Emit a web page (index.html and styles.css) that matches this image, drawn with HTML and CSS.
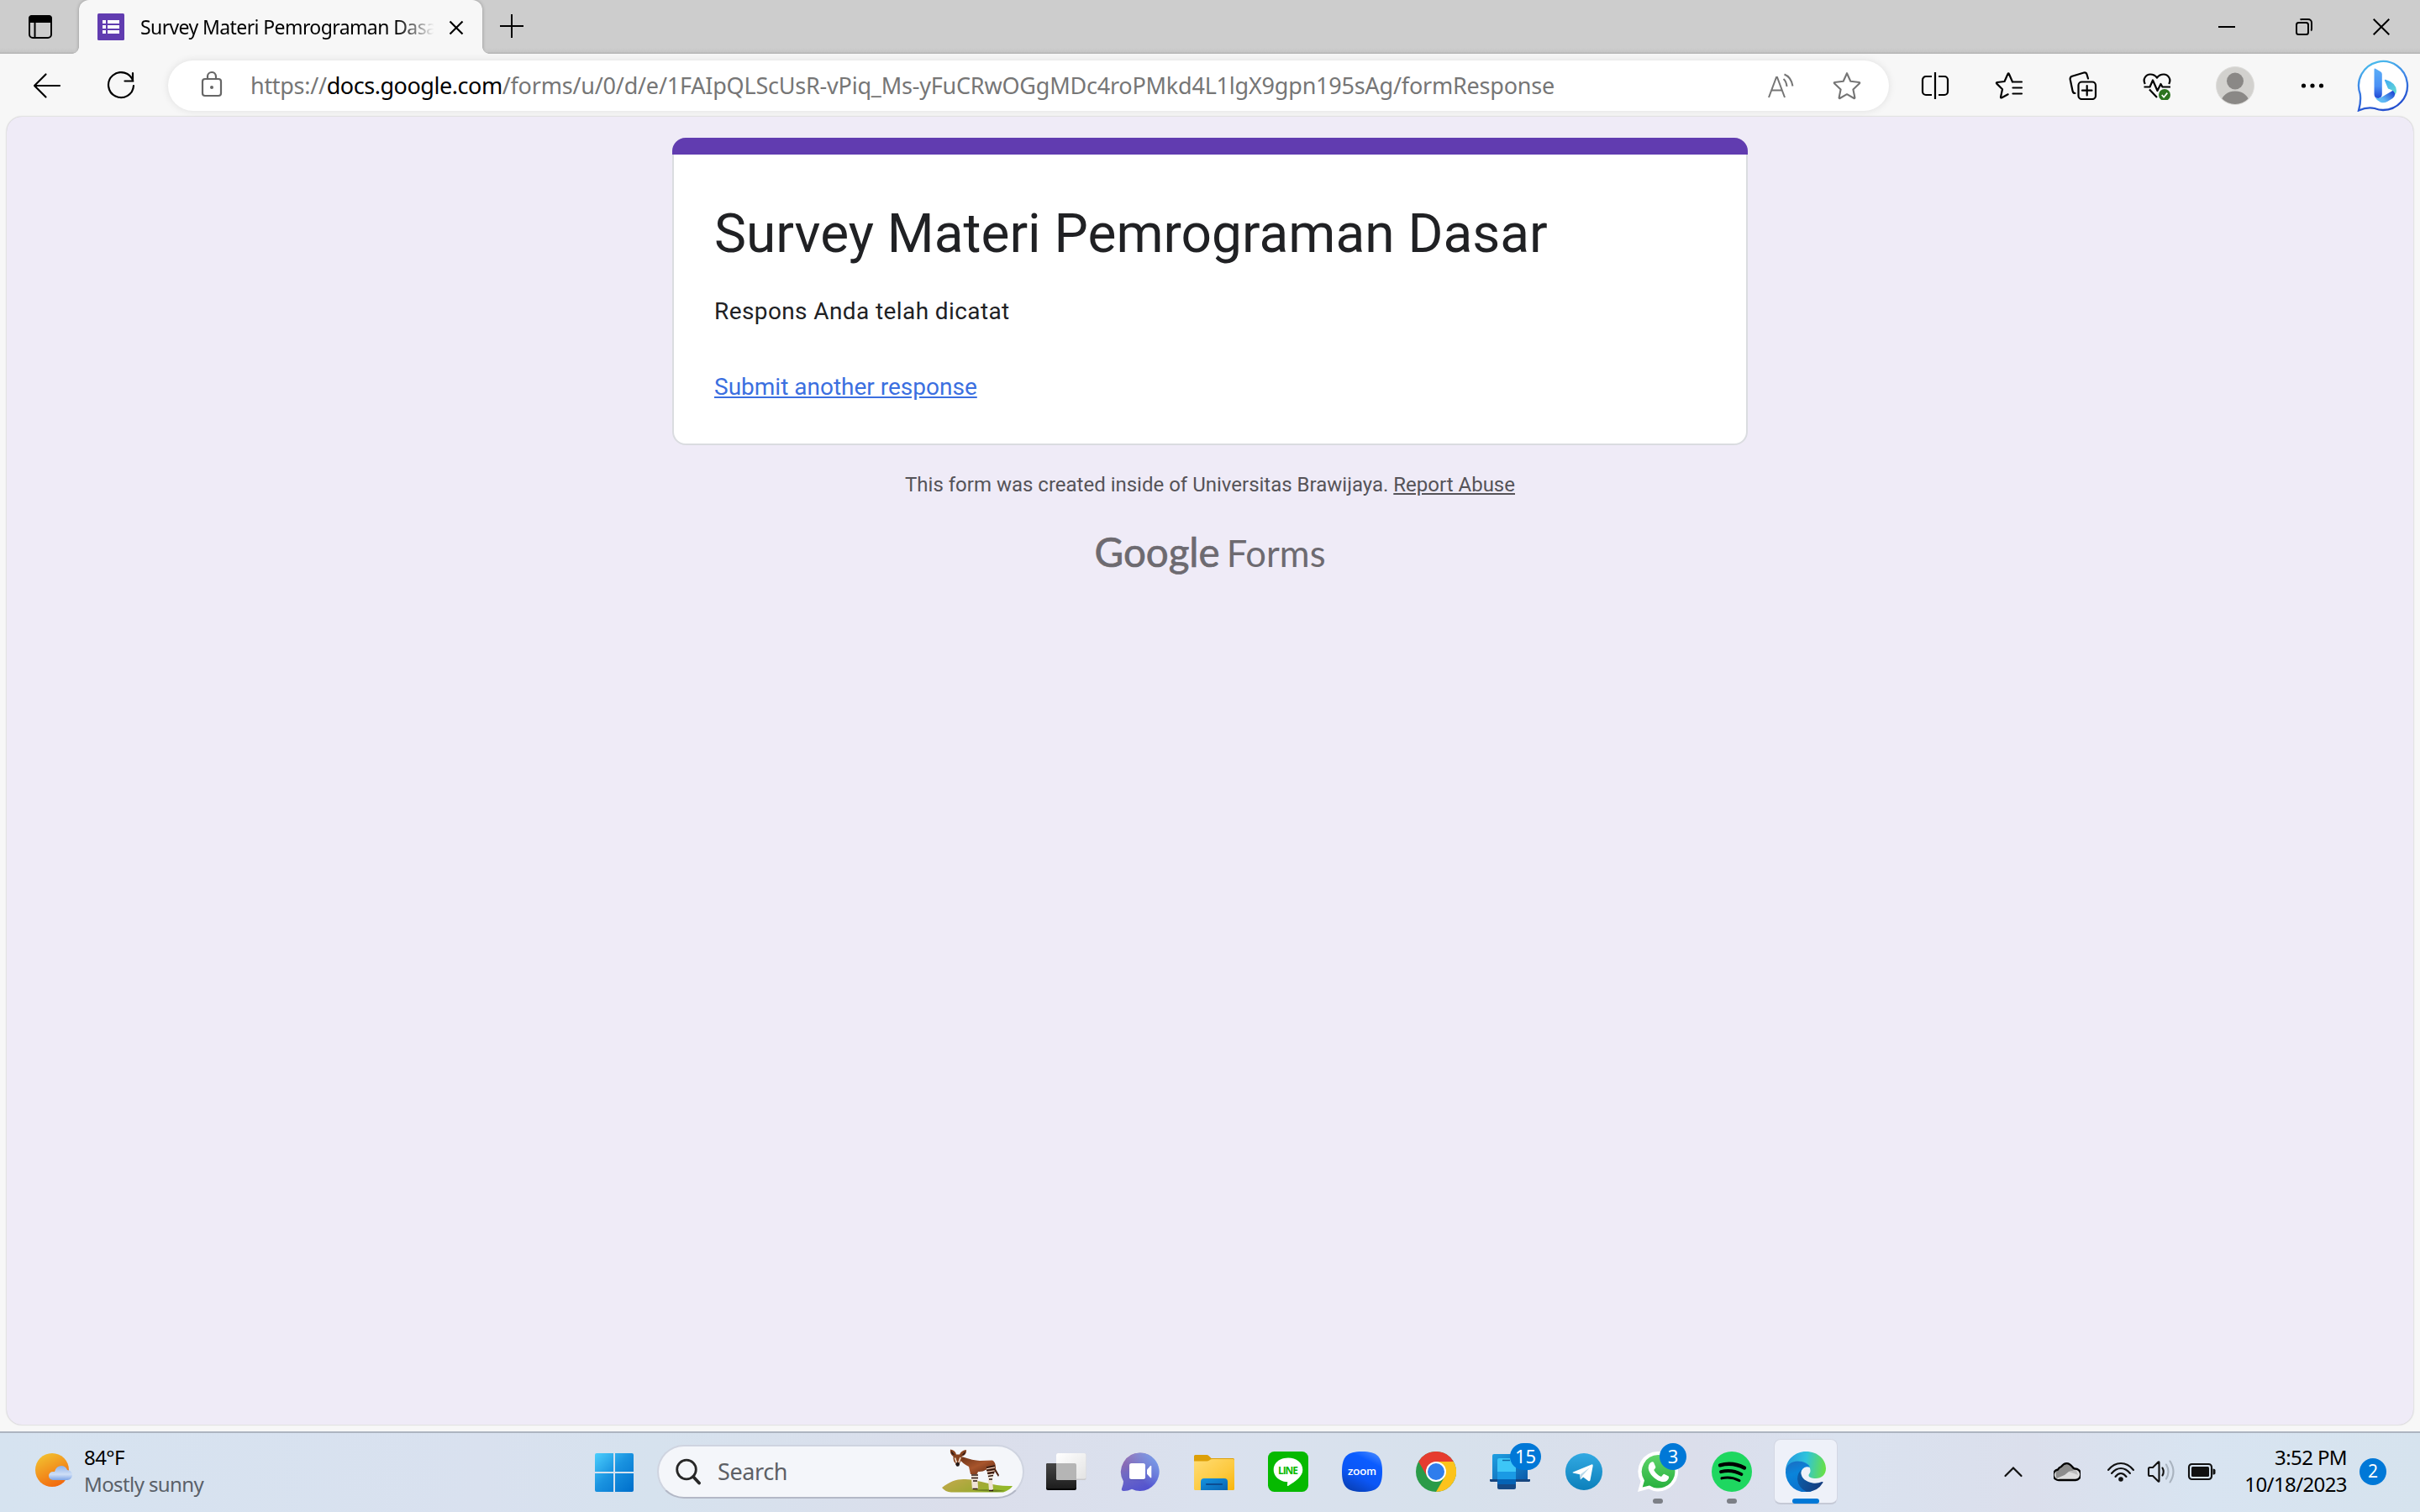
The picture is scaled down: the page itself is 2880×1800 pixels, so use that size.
FILE: index.html
```html
<!DOCTYPE html>
<html lang="id">
<head>
<meta charset="utf-8">
<title>Survey Materi Pemrograman Dasar</title>
<link rel="stylesheet" href="styles.css">
</head>
<body>
<header class="tabstrip">
  <div class="tab-actions">
    <svg width="28" height="28" viewBox="0 0 28 28"><rect x="1" y="1" width="26" height="26" rx="4" fill="none" stroke="#000" stroke-width="2"/><path d="M0 9V4a4 4 0 0 1 4-4h20a4 4 0 0 1 4 4v5z"/><path d="M7.5 8v19" stroke="#000" stroke-width="2"/></svg>
  </div>
  <div class="tab">
    <svg class="favicon" width="32" height="32" viewBox="0 0 32 32"><rect width="32" height="32" rx="1.5" fill="#613cb0"/><path fill="#fff" d="M6 8h4v4H6zM12 8h14v4H12zM6 14h4v4H6zM12 14h14v4H12zM6 20h4v4H6zM12 20h14v4H12z"/></svg>
    <span class="tab-title">Survey Materi Pemrograman Dasar</span>
    <svg class="tab-close" width="18" height="18" viewBox="0 0 18 18"><path d="M1.5 1.5l15 15M16.500 1.500l-15 15" stroke="#000" stroke-width="2.200"/></svg>
  </div>
  <svg class="new-tab" width="28" height="28" viewBox="0 0 28 28"><path d="M14 0v28M0 14h28" stroke="#000" stroke-width="2"/></svg>
  <div class="window-controls">
    <span><svg width="20" height="20" viewBox="0 0 20 20"><path d="M0 10h20" stroke="#000" stroke-width="2"/></svg></span>
    <span><svg width="20" height="20" viewBox="0 0 20 20" fill="none" stroke="#000" stroke-width="2"><rect x="1" y="5" width="14" height="14" rx="2.500"/><path d="M5.500 1.500Q6 1 7.500 1H15a4 4 0 0 1 4 4v7.500q0 1.500-.8 2"/></svg></span>
    <span><svg width="20" height="20" viewBox="0 0 20 20"><path d="M.7.7l18.600 18.600M19.300.7L.7 19.300" stroke="#000" stroke-width="2"/></svg></span>
  </div>
</header>

<nav class="toolbar">
  <div class="nav-btn"><svg width="34" height="32" viewBox="0 0 34 32" fill="none" stroke="#000" stroke-width="2.200" stroke-linecap="round" stroke-linejoin="round"><path d="M32 16H2M15.500 2.500L2 16l13.500 13.500"/></svg></div>
  <div class="nav-btn refresh"><svg width="34" height="34" viewBox="0 0 34 34" fill="none" stroke="#000" stroke-width="2.200" stroke-linecap="round" stroke-linejoin="round"><path d="M31.300 11.500A15 15 0 1 0 32 17M31 2v9.500H21.500"/></svg></div>
  <div class="address">
    <svg class="lock" width="26" height="32" viewBox="0 0 26 32" fill="none" stroke="#666" stroke-width="2.200"><rect x="2" y="10" width="22" height="20" rx="3"/><path d="M8 10V7a5 5 0 0 1 10 0v3"/><circle cx="13" cy="20" r="2" fill="#666" stroke="none"/></svg>
    <span class="url"><span class="scheme">https://</span><b>docs.google.com</b>/forms/u/0/d/e/1FAIpQLScUsR-vPiq_Ms-yFuCRwOGgMDc4roPMkd4L1lgX9gpn195sAg/formResponse</span>
    <svg class="read" width="32" height="32" viewBox="0 0 32 32" fill="none" stroke="#757575" stroke-width="2"><path d="M2 30L11 6h1l9 24M5.500 21.500h12M19.500 8q3.500 3 4 9M20.500 2.500q8 3 10 14"/></svg>
    <svg class="star" width="34" height="34" viewBox="0 0 34 34" fill="none" stroke="#757575" stroke-width="2.100" stroke-linejoin="round"><path d="M17 2.200l4.300 9.600 10.400 1.200q1 .2.300 1.200l-7.600 7.300 2 9.700q.1 1.200-1 .8L17 27.200 8.600 32q-1.100.4-1-.8l2-9.700L2 14.200q-.7-1 .3-1.200l10.400-1.200z"/></svg>
  </div>
  <div class="tools">
    <span><svg width="34" height="34" viewBox="0 0 34 34" fill="none" stroke="#000" stroke-width="2.200"><path d="M17 1v32M13 6H6a4 4 0 0 0-4 4v14a4 4 0 0 0 4 4h7M21 6h7a4 4 0 0 1 4 4v14a4 4 0 0 1-4 4h-7"/></svg></span>
    <span><svg width="34" height="34" viewBox="0 0 34 34" fill="none" stroke="#000" stroke-width="2.200" stroke-linecap="round" stroke-linejoin="round"><path d="M21 12.500l-4-9.300q-.8-1.600-1.600 0L11.500 12l-8.700 1q-1.600.4-.5 1.600l6.700 6.600-2 9.300q0 1.500 1.400.8l7.300-4M21.500 12.500H32M21.500 19.500H32M21.500 26.500H32"/></svg></span>
    <span><svg width="34" height="34" viewBox="0 0 34 34" fill="none" stroke="#000" stroke-width="2.200" stroke-linecap="round"><rect x="11.500" y="12.500" width="20.500" height="20.500" rx="4"/><path d="M21.700 17v11.500M16 22.700h11.500M7.500 26Q5 26 4.500 23L1.700 9.500Q1.300 6.500 4 5.700L18 1.500q2.700-.5 3.500 2L23 8.500"/></svg></span>
    <span><svg width="34" height="34" viewBox="0 0 34 34" fill="none" stroke="#000" stroke-width="2.200" stroke-linejoin="round"><path d="M2.800 15C-.5 9 4 3.500 9 3.500q5 0 8 4 3-4 8-4c5 0 9.500 5.500 6.200 11.500M1.500 18.500h7l3.500-8 5.500 12.500 4-8 2 3.500h9.500M8 21.500l9 9.500"/><circle cx="26" cy="28" r="8" fill="#f7f7f7" stroke="none"/><circle cx="26" cy="28" r="7" fill="#2c7420" stroke="none"/><path d="M22.800 28l2.300 2.800 4.200-5.200" stroke="#fff" stroke-width="1.700"/></svg></span>
    <span class="profile"><svg width="46" height="46" viewBox="0 0 46 46"><defs><clipPath id="av"><circle cx="23" cy="23" r="22"/></clipPath></defs><circle cx="23" cy="23" r="22.500" fill="#d2d1ce" stroke="#dddcda"/><g fill="#8a8886" clip-path="url(#av)"><circle cx="23" cy="17.500" r="10"/><path d="M5 46q3-16.500 18-16.500T41 46z"/></g></svg></span>
    <span><svg width="28" height="8" viewBox="0 0 28 8"><circle cx="3.500" cy="4" r="2.600"/><circle cx="14" cy="4" r="2.600"/><circle cx="24.500" cy="4" r="2.600"/></svg></span>
    <span class="bing"><svg width="62" height="62" viewBox="0 0 62 62"><defs><linearGradient id="bo" x1="0" y1="0" x2=".3" y2="1"><stop offset="0" stop-color="#4dc8ee"/><stop offset=".5" stop-color="#3f86e6"/><stop offset="1" stop-color="#2450cf"/></linearGradient><linearGradient id="b1" x1="0" y1="0" x2="0" y2="1"><stop offset="0" stop-color="#5aaef8"/><stop offset=".6" stop-color="#4a90f5"/><stop offset="1" stop-color="#1f48d4"/></linearGradient><linearGradient id="b2" x1="0" y1="1" x2="1" y2=".3"><stop offset="0" stop-color="#61c7f6"/><stop offset=".4" stop-color="#5fb6f4"/><stop offset="1" stop-color="#1f48d4"/></linearGradient><linearGradient id="b3" x1="0" y1="0" x2="1" y2="1"><stop offset="0" stop-color="#3fa8f2"/><stop offset="1" stop-color="#67dfd2"/></linearGradient></defs><path d="M2 60.500Q5 50 3.800 41A29 29 0 1 1 31 60q-5 0-10-2-9-2-19 2.500z" fill="#fff" stroke="url(#bo)" stroke-width="2.300"/><path d="M20.500 11.500q0-1.500 1.500-.8l6 3.500q1.800 1 1.800 3V41q0 4.500-4.500 5-4.800 0-4.800-5z" fill="url(#b1)"/><path d="M21.500 45q4.500 2 8-.5L44 36q3.500 5.500-1.500 10L36 50q-4 2.300-8 .7-4.500-2-6.500-5.700z" fill="url(#b2)"/><path d="M33 25q-.5-1.700 1-1.200Q46.500 27.500 47 37q0 2.500-1.200 4.500Q44.500 37.500 41 36l-4-1.500z" fill="url(#b3)"/></svg></span>
  </div>
</nav>

<main class="page">
  <section class="card">
    <h1>Survey Materi Pemrograman Dasar</h1>
    <p class="message">Respons Anda telah dicatat</p>
    <a class="again">Submit another response</a>
  </section>
  <p class="disclaimer">This form was created inside of Universitas Brawijaya. <a>Report Abuse</a></p>
  <div class="logo"><span class="google">Google</span><span class="forms">Forms</span></div>
</main>

<footer class="taskbar">
  <div class="weather">
    <svg width="46" height="44" viewBox="0 0 46 44"><defs><linearGradient id="sun" x1=".2" y1="0" x2=".7" y2="1"><stop offset="0" stop-color="#f2c230"/><stop offset="1" stop-color="#f2660d"/></linearGradient><linearGradient id="cl" x1="0" y1="0" x2="0" y2="1"><stop offset="0" stop-color="#8fb2ea"/><stop offset=".6" stop-color="#cfdff6"/><stop offset="1" stop-color="#7ea5e6"/></linearGradient></defs><circle cx="20" cy="20" r="20" fill="url(#sun)"/><path d="M21 32a5 5 0 0 1 0-10h2q2-7 8-7 5 0 7 5a6 6 0 0 1 0 12z" fill="url(#cl)"/></svg>
    <div class="two-line"><span>84°F</span><span class="sky">Mostly sunny</span></div>
  </div>
  <div class="apps">
    <span class="app"><svg width="48" height="48" viewBox="0 0 48 48"><defs><linearGradient id="win" gradientUnits="userSpaceOnUse" x1="0" y1="0" x2="46" y2="46"><stop offset="0" stop-color="#4fd3ff"/><stop offset=".5" stop-color="#1a93e0"/><stop offset="1" stop-color="#0070cc"/></linearGradient></defs><path fill="url(#win)" d="M3 2h20v22H1V4q0-2 2-2zM25 2h20q2 0 2 2v20H25zM1 26h22v22H3q-2 0-2-2zM25 26h22v20q0 2-2 2H25z"/></svg></span>
    <div class="search">
      <svg class="lens" width="30" height="32" viewBox="0 0 30 32" fill="none" stroke="#272727"><circle cx="13" cy="13.500" r="11.300" stroke-width="2.800"/><path d="M21 22l7 7.500" stroke-width="3.800" stroke-linecap="round"/></svg>
      <span class="placeholder">Search</span>
      <svg class="okapi" width="86" height="54" viewBox="0 0 86 54"><defs><linearGradient id="hill" x1="0" y1="0" x2="1" y2=".4"><stop offset="0" stop-color="#c6a94e"/><stop offset=".6" stop-color="#a3a936"/><stop offset="1" stop-color="#93b829"/></linearGradient><linearGradient id="ok" x1="0" y1="0" x2="1" y2="1"><stop offset="0" stop-color="#6b3217"/><stop offset=".5" stop-color="#a8552c"/><stop offset="1" stop-color="#5a2712"/></linearGradient></defs>
        <path d="M0 46C10 38 18 35.500 28 36c20 1 32 9 56 8q-3 5-11 7.500H11Q4 51 0 46z" fill="url(#hill)"/><path d="M38 49.500q14-3 38 .5l-12 1z" fill="#59691c" opacity=".6"/>
        <path d="M60 15q3 4 4 9l4 7-1 2-5-8z" fill="#4b2110"/>
        <path d="M35 26h4l1 10v12h-4l-1-12zM39.500 26h3.500l-.5 11 .5 10h-3l-1-11zM54 27l6 1-1 9 1 12.500h-4l-1-12.500zM59 26l3 2-2 9 1 11h-3z" fill="#efe3d5"/>
        <path d="M20 10l5-.5q12 4 20 4.500l15-.5q4 2 4 9l-2 7-7 1-2-6q-5 3-10 2.500l-1.500 3H34l-2-9q-8-4-10-8z" fill="url(#ok)"/>
        <path d="M53 22l10-2M53 25.500l10-1.500M54 29l8-1M55 32.500l6-1M35 31h8M35 34.500h8M37 38h5M56 36h4M36.500 47.500h6M56 49.500h5" stroke="#2d1710" stroke-width="1.600"/>
        <path d="M53 23.800l10-2M53.500 27.300l9-1.500M54.500 30.800l6-1" stroke="#f3e6da" stroke-width="1"/>
        <path d="M10 .5q6 1 7 6h4q2-5 8-5.500.5 6-5.500 8 1 4-1.500 6-1 4-3 5t-3-3q-3-3-2.500-8-4.500-3-3.500-8.500z" fill="#87431f"/><path d="M11 2l4.500 5.500-4-1.500zM28 2.500L23 8l4-1.500z" fill="#2f1b18"/><path d="M15.500 10.500l2 6M22 10l-2 6" stroke="#f0dfcf" stroke-width="1.600"/><ellipse cx="18.700" cy="18.300" rx="2.200" ry="2.500" fill="#201818"/></svg>
    </div>
    <span class="app"><svg width="50" height="48" viewBox="0 0 50 48"><defs><linearGradient id="tv" x1="0" y1="0" x2="0" y2="1"><stop offset="0" stop-color="#454545"/><stop offset="1" stop-color="#1d1d1d"/></linearGradient><linearGradient id="tw" x1="0" y1="0" x2="1" y2="1"><stop offset="0" stop-color="#fff"/><stop offset="1" stop-color="#e3e3e3"/></linearGradient></defs><rect x="1" y="14" width="36" height="32" rx="2" fill="#050505"/><rect x="1" y="14" width="36" height="30" rx="2" fill="url(#tv)"/><rect x="13" y="2" width="35.500" height="32" rx="2" fill="#c9c9cc"/><rect x="13" y="2" width="35.500" height="30.500" rx="2" fill="url(#tw)"/><path d="M13 14h22q2 0 2 2v18H15q-2 0-2-2z" fill="#b5b5b5"/></svg></span>
    <span class="app"><svg width="48" height="48" viewBox="0 0 48 48"><defs><linearGradient id="ch" x1=".1" y1=".1" x2=".5" y2="1"><stop offset="0" stop-color="#9a6bac"/><stop offset=".45" stop-color="#6f69c4"/><stop offset="1" stop-color="#5353cf"/></linearGradient><linearGradient id="ch2" x1="1" y1="0" x2=".4" y2=".6"><stop offset="0" stop-color="#7aa7f2"/><stop offset="1" stop-color="#7aa7f2" stop-opacity="0"/></linearGradient></defs><path d="M24 1.500a22.700 22.700 0 1 1-10 43.200q-5 2.500-10 2.300-3-.3-2-3 2-5 2-8.500A22.700 22.700 0 0 1 24 1.500z" fill="url(#ch)"/><circle cx="24" cy="24.200" r="22.700" fill="url(#ch2)"/><rect x="11" y="15" width="19" height="19" rx="2.500" fill="#4042a0" opacity=".5"/><rect x="11" y="14" width="19" height="19" rx="2.500" fill="#fff"/><path d="M32 21.500l4-4.300q1.300-1 1.300.8v12.500q0 1.500-1.300.5l-4-4.300z" fill="#fff"/></svg></span>
    <span class="app"><svg width="48" height="48" viewBox="0 0 48 48"><defs><linearGradient id="fo" x1="0" y1="0" x2="1" y2="1"><stop offset="0" stop-color="#ffdc73"/><stop offset=".6" stop-color="#fdc93f"/><stop offset="1" stop-color="#f9b50b"/></linearGradient><linearGradient id="fb" x1="0" y1="0" x2="1" y2="1"><stop offset="0" stop-color="#1493e0"/><stop offset="1" stop-color="#0a64b2"/></linearGradient></defs><path d="M0 5.500Q0 4 1.500 4H15q1.500 0 2.700 1.300L20.500 8H46.500Q48 8 48 9.500V20H0z" fill="#dd9f07"/><path d="M0 11.500H15q2 0 3.500-1.200Q20 9 22 9H46.500Q48 9 48 10.500V44.500q0 1.500-1.500 1.500H1.500Q0 46 0 44.500z" fill="url(#fo)"/><path d="M8 46V36q0-4 4-4h24q4 0 4 4v10z" fill="url(#fb)"/><path d="M15 39h18" stroke="#0c4d92" stroke-width="2.200" stroke-linecap="round"/></svg></span>
    <span class="app"><svg width="48" height="48" viewBox="0 0 48 48"><rect width="48" height="48" rx="7.500" fill="#06b900"/><path d="M24 7.500c9.800 0 17.300 6 17.300 14.200 0 8-8.300 13.300-17.300 19.300q-1.500.5-1-1.500l.3-3.300C13.500 35.700 6.700 29.500 6.700 21.700 6.700 13.500 14.200 7.500 24 7.500z" fill="#fff"/><text x="24" y="26.500" text-anchor="middle" class="line-text" textLength="24">LINE</text></svg></span>
    <span class="app"><svg width="48" height="48" viewBox="0 0 48 48"><defs><linearGradient id="zo" x1=".8" y1="0" x2=".3" y2="1"><stop offset="0" stop-color="#4587ff"/><stop offset=".25" stop-color="#0b5cff"/><stop offset=".65" stop-color="#0b56f5"/><stop offset="1" stop-color="#0840b8"/></linearGradient></defs><path d="M24 0c18 0 24 6 24 24s-6 24-24 24S0 42 0 24 6 0 24 0z" fill="url(#zo)"/><text x="24" y="28" text-anchor="middle" class="zoom-text" textLength="34">zoom</text></svg></span>
    <span class="app"><svg width="48" height="48" viewBox="0 0 48 48"><circle cx="24" cy="24" r="24" fill="#2a9b48"/><path d="M24 12H44.800A24 24 0 0 1 24 48L34.400 30z" fill="#fcc31b"/><path d="M3.200 12A24 24 0 0 1 44.800 12H24L13.600 30z" fill="#e63c30"/><circle cx="24" cy="24" r="12" fill="#fff"/><circle cx="24" cy="24" r="10" fill="#2f7ded"/></svg></span>
    <span class="app"><svg width="48" height="48" viewBox="0 0 48 48"><defs><linearGradient id="pl" x1="0" y1="0" x2="1" y2="1"><stop offset="0" stop-color="#1fa0e2"/><stop offset="1" stop-color="#0b5cab"/></linearGradient></defs><path d="M3 5q0-2 2-2h38q2 0 2 2v28H3z" fill="url(#pl)"/><path d="M0 33h48v1.500q0 1.500-1.500 1.500h-45Q0 36 0 34.500z" fill="#17467f"/><path d="M9 9h22v24H9z" fill="#1384cf"/><path d="M9 10q0-2 2-2h18q2 0 2 2v14H9z" fill="#3dc6f7"/><path d="M9 24h22v9H9z" fill="#1a9ae4"/><path d="M9 33h22v6H9z" fill="#0563b5"/><path d="M9 39h22v4q0 2-2 2H11q-2 0-2-2z" fill="#164a86"/><path d="M15 10.500h9" stroke="#116aa8" stroke-width="1.500"/></svg><i class="badge b15">15</i></span>
    <span class="app"><svg width="48" height="48" viewBox="0 0 48 48"><defs><linearGradient id="tg" x1="0" y1="0" x2="0" y2="1"><stop offset="0" stop-color="#32a9e2"/><stop offset="1" stop-color="#0c80bb"/></linearGradient></defs><circle cx="24" cy="24" r="22" fill="url(#tg)"/><path d="M11 24.500L33 15.500q2-.6 1.700 1.500L31.500 34q-.6 2-2.300 1l-6-4.500-3.300 3-.8-6.300L11 25.500q-1-.5 0-1z" fill="#fff"/><path d="M19.500 27.500L31 19l-9 10-2 4.500z" fill="#b8d9ea"/></svg></span>
    <span class="app running"><svg width="48" height="48" viewBox="0 0 48 48"><defs><linearGradient id="wa" x1="0" y1="0" x2="0" y2="1"><stop offset="0" stop-color="#5fd46a"/><stop offset="1" stop-color="#28b13e"/></linearGradient></defs><path d="M24.500 0A23.700 23.700 0 1 1 13 44.500L0 48l3.500-12.500A23.700 23.700 0 0 1 24.500 0z" fill="#fff"/><path d="M24.500 4A19.800 19.800 0 1 1 14 40.500L5.700 42.500 8 34.500A19.800 19.800 0 0 1 24.500 4z" fill="url(#wa)"/><path d="M16.500 12.500q2-.7 2.700.8l2 4.700q.4 1-.4 2l-1.600 2q3.300 5.700 8.800 8l2.200-2.600q.8-.8 1.700-.4l4.500 2.200q1 .6.700 2-1.300 4.600-6.600 4.800c-8 0-18-9.500-17.800-17q.3-4.700 3.800-6.500z" fill="#fff"/></svg><i class="badge b3">3</i></span>
    <span class="app running"><svg width="48" height="48" viewBox="0 0 48 48" fill="none" stroke="#000" stroke-linecap="round"><circle cx="24" cy="24" r="24" fill="#1ed760" stroke="none"/><path d="M10 16.300q15-4.300 29 3.200" stroke-width="4.400"/><path d="M11 24.200q12.500-3.500 24.500 3" stroke-width="3.800"/><path d="M12 31.800q11-2.500 21 2.800" stroke-width="3.100"/></svg></span>
    <span class="app active"><svg width="48" height="48" viewBox="0 0 48 48"><defs><linearGradient id="e1" x1="0" y1=".3" x2="1" y2=".4"><stop offset="0" stop-color="#2297e0"/><stop offset=".5" stop-color="#2fc3dc"/><stop offset="1" stop-color="#67e048"/></linearGradient><linearGradient id="e2" x1=".2" y1="0" x2=".5" y2="1"><stop offset="0" stop-color="#1a6fc4"/><stop offset=".4" stop-color="#0a84da"/><stop offset="1" stop-color="#0c70cc"/></linearGradient><linearGradient id="e3" x1="0" y1="0" x2="1" y2=".4"><stop offset="0" stop-color="#0b61ae"/><stop offset="1" stop-color="#153f82"/></linearGradient></defs><path d="M0 24C0 9 12 0 24 0c15 0 24 10 24 20 0 8-5.500 12-12 12-5 0-8.500-1.500-8.500-3.500s2-2.500 2-6c0-5-5-10-12-10Q4 12.500 0 24z" fill="url(#e1)"/><path d="M0 24Q1.500 12 14.500 11.500 26 11.500 29 19q-3.500-1.500-6.500 0-5 3-4.500 10 1 13 13 18.500A24 24 0 0 1 0 24z" fill="url(#e2)"/><path d="M19.500 21Q14 25 14 33q1 10 11 15 13 0 19.500-11 .3-1.500-1.300-.9-5 2.200-11 1.400-13-2.500-14-12.500 0-2.500 1.300-5z" fill="url(#e3)"/></svg></span>
  </div>
  <div class="tray">
    <svg class="chev" width="24" height="16" viewBox="0 0 24 16" fill="none" stroke="#111" stroke-width="2.200" stroke-linecap="round"><path d="M2.500 13L12 3.500 21.500 13"/></svg>
    <svg class="cloud" width="32" height="24" viewBox="0 0 32 24"><path d="M7 22A6 6 0 0 1 5 9.500 8 8 0 0 1 9 6q6-8 13 1l3 2a6 6 0 0 1 1 13z" fill="#dedede"/><path d="M4.500 10q5-3 7-6.500Q18-.5 22 7l4 3-8 2-5 4-9.500 4Q1 13 4.500 10z" fill="#8d8d8d"/><path d="M18 12l6 2 5 2-2-6z" fill="#bdbdbd"/><path d="M7 22A6 6 0 0 1 5 9.500 8 8 0 0 1 9 6q6.500-8 13.500.5 1 1.500 2.500 2a6.500 6.500 0 0 1 1 13.500z" fill="none" stroke="#000" stroke-width="2.300"/></svg>
    <svg class="wifi" width="34" height="26" viewBox="0 0 34 26" fill="none" stroke="#111" stroke-width="2.100" stroke-linecap="round"><path d="M2 11Q8.500 3 17 3t15 8M6 15q5-6 11-6t11 6M10.500 19q3-4 6.500-4t6.500 4"/><circle cx="17" cy="22" r="2.800" fill="#111" stroke="none"/></svg>
    <svg class="vol" width="34" height="30" viewBox="0 0 34 30" fill="none" stroke="#111" stroke-width="2.100" stroke-linecap="round" stroke-linejoin="round"><path d="M2 11.500q0-1.500 1.500-1.500H7l6.500-6.500q1-.8 1 .5v22q0 1.300-1 .5L7 20H3.500Q2 20 2 18.500zM18.500 10.500q2.500 4.500 0 9"/><path d="M23 6.500q5 8.500 0 17M27.500 2.500q8 12.500 0 25" stroke="#a9b3bf"/></svg>
    <svg class="batt" width="34" height="22" viewBox="0 0 34 22"><rect x="2" y="2" width="27" height="18" rx="3.500" fill="none" stroke="#111" stroke-width="2.100"/><rect x="5" y="5" width="21" height="12" rx="1.500" fill="#111"/><path d="M30.500 7.500q3 0 3 2v3q0 2-3 2z" fill="#111"/></svg>
    <div class="two-line clock"><span>3:52 PM</span><span>10/18/2023</span></div>
    <i class="count">2</i>
  </div>
</footer>
</body>
</html>
```
FILE: styles.css
```css
* { box-sizing: border-box; }
body {
  margin: 0;
  width: 2880px;
  height: 1800px;
  overflow: hidden;
  display: flex;
  flex-direction: column;
  background: #f7f7f7;
  color: #000;
  font-family: "Noto Sans", "Open Sans", sans-serif;
  font-size: 24px;
}
svg { display: block; flex: none; }
i, b { font-style: normal; font-weight: 400; }

/* Tab strip */
.tabstrip {
  flex: none;
  height: 64px;
  display: flex;
  align-items: center;
  background: linear-gradient(#cdcdcd 57px, #c6c6c6 62px, #b5b5b5 63px);
}
.tab-actions { width: 94px; padding-left: 34px; }
.tab {
  position: relative;
  width: 480px;
  height: 64px;
  padding: 0 22px;
  display: flex;
  align-items: center;
  background: #f7f7f7;
  border-radius: 12px 12px 0 0;
  box-shadow: 0 0 4px rgba(0, 0, 0, .28);
  clip-path: inset(0 -8px 0 -8px);
}
.tab::before, .tab::after {
  content: "";
  position: absolute;
  bottom: 0;
  width: 8px;
  height: 8px;
}
.tab::before { left: -8px; background: radial-gradient(circle at 0 0, transparent 7.5px, #f7f7f7 8px); }
.tab::after { right: -8px; background: radial-gradient(circle at 100% 0, transparent 7.5px, #f7f7f7 8px); }
.tab-title {
  margin-left: 19px;
  width: 349px;
  overflow: hidden;
  white-space: nowrap;
  font-size: 23px;
  letter-spacing: -.6px;
  line-height: 32px;
  -webkit-mask-image: linear-gradient(90deg, #000 305px, transparent 350px);
  mask-image: linear-gradient(90deg, #000 305px, transparent 350px);
}
.tab-close { margin: 2px 0 0 18px; }
.new-tab { margin-left: 21px; margin-top: -2px; }
.window-controls { margin-left: auto; display: flex; }
.window-controls span { width: 92px; display: flex; justify-content: center; }

/* Toolbar */
.toolbar {
  flex: none;
  height: 75px;
  padding: 8px 0 7px;
  display: flex;
  align-items: center;
}
.nav-btn { width: 112px; padding-left: 39px; }
.nav-btn.refresh { width: 88px; padding-left: 15px; }
.address {
  width: 2048px;
  height: 60px;
  padding-left: 39px;
  display: flex;
  align-items: center;
  background: #fff;
  border-radius: 30px;
  box-shadow: 0 0 10px rgba(0, 0, 0, .1);
}
.url {
  margin-left: 33px;
  width: 1805px;
  font-size: 27px;
  line-height: 40px;
  letter-spacing: -.21px;
  color: #767676;
  white-space: nowrap;
}
.scheme { letter-spacing: -.3px; }
.url b { color: #000; letter-spacing: -.46px; }
.lock { margin-top: -4px; }
.star { margin-left: 46px; }
.tools { display: flex; align-items: center; margin-left: 11px; }
.tools span { width: 88px; display: flex; justify-content: center; }
.tools .profile { width: 97px; }
.tools .bing { width: 80px; }

/* Form page */
.page {
  flex: 1;
  margin: 0 8px 8px;
  padding-top: 25px;
  display: flex;
  flex-direction: column;
  align-items: center;
  background: #efebf7;
  border-radius: 18px;
  box-shadow: 0 0 2px rgba(0, 0, 0, .3);
  font-family: Roboto, sans-serif;
}
.card {
  position: relative;
  width: 1280px;
  height: 366px;
  padding: 73px 48px 0;
  display: flex;
  flex-direction: column;
  align-items: flex-start;
  background: #fff;
  border: 2px solid #dadce0;
  border-radius: 16px;
}
.card::before {
  content: "";
  position: absolute;
  top: -2px;
  left: -2px;
  right: -2px;
  height: 20px;
  border-radius: 16px 16px 0 0;
  background: #613cb0;
}
h1 { margin: 0; font-size: 64px; font-weight: 400; line-height: 80px; color: #202124; }
.message { margin: 32px 0 50px; font-size: 28px; line-height: 40px; letter-spacing: .4px; color: #202124; }
.again { font-size: 28px; line-height: 40px; color: #3b6fe0; text-decoration: underline; }
.disclaimer { margin: 31px 0 0; line-height: 32px; color: #555358; }
.disclaimer a { text-decoration: underline; }
.logo { margin-top: 34px; display: flex; align-items: baseline; font-family: Lato, sans-serif; color: #6d6a70; line-height: 60px; }
.google { font-size: 47.5px; -webkit-text-stroke: .7px #6d6a70; }
.forms { margin-left: 8px; font-size: 43.5px; }

/* Taskbar */
.taskbar {
  flex: none;
  height: 96px;
  display: flex;
  align-items: center;
  background: linear-gradient(90deg, #d6e3f0, #d9e1ef 20%, #d6e2ee 27%, #dbdeeb 40%, #dae1ee 50%, #d7e1ec 60%, #dbdeeb 70%, #dae2ef 76%, #dbdfec 84%, #d8e4f1 91%, #d6e3ee);
  box-shadow: inset 0 2px #adb5c0;
}
.weather { width: 687px; padding-left: 42px; display: flex; align-items: center; gap: 12px; }
.two-line {
  display: flex;
  flex-direction: column;
  align-items: flex-start;
  margin-top: -2px;
  line-height: 32px;
  letter-spacing: -.6px;
}
.sky { color: #5a6068; }
.apps { display: flex; align-items: center; }
.app {
  position: relative;
  width: 88px;
  height: 78px;
  display: flex;
  align-items: center;
  justify-content: center;
}
.search {
  width: 437px;
  height: 64px;
  margin: 0 6px 0 7px;
  padding-left: 20px;
  display: flex;
  align-items: center;
  background: #f4f6fa;
  border: 2px solid #cfd4e0;
  border-bottom-color: #b3b8c6;
  border-radius: 32px;
}
.placeholder { width: 267px; margin-left: 20px; font-size: 27px; line-height: 40px; letter-spacing: -.4px; color: #5d6065; }
.line-text { font: 700 12px "Open Sans", sans-serif; fill: #06b900; }
.zoom-text { font: 600 14px Lato, sans-serif; fill: #fff; }
.badge, .count {
  height: 32px;
  border-radius: 16px;
  background: #0078d7;
  color: #fff;
  text-align: center;
  line-height: 31px;
}
.badge { position: absolute; top: 5px; font-size: 22px; }
.b15 { left: 44px; width: 37px; }
.b3 { left: 46px; width: 32px; }
.running::after, .active::after {
  content: "";
  position: absolute;
  bottom: 1px;
  left: 38px;
  width: 12px;
  height: 6px;
  border-radius: 3px;
  background: #7c7f86;
}
.active::after { left: 28px; width: 32px; background: #0078d7; }
.active::before {
  content: "";
  position: absolute;
  inset: 0 6px;
  border-radius: 8px;
  background: #eef1f9;
  border: 1px solid #d3d7e3;
  border-bottom: 2px solid #c5c9d6;
}
.active svg { position: relative; }
.tray { margin-left: auto; padding-right: 40px; display: flex; align-items: center; }
.cloud { margin-left: 36px; }
.wifi { margin-left: 31px; }
.vol { margin-left: 14px; }
.batt { margin-left: 14px; }
.clock { width: 156px; align-items: flex-end; }
.count { width: 32px; margin-left: 15px; font-size: 21px; }
```
